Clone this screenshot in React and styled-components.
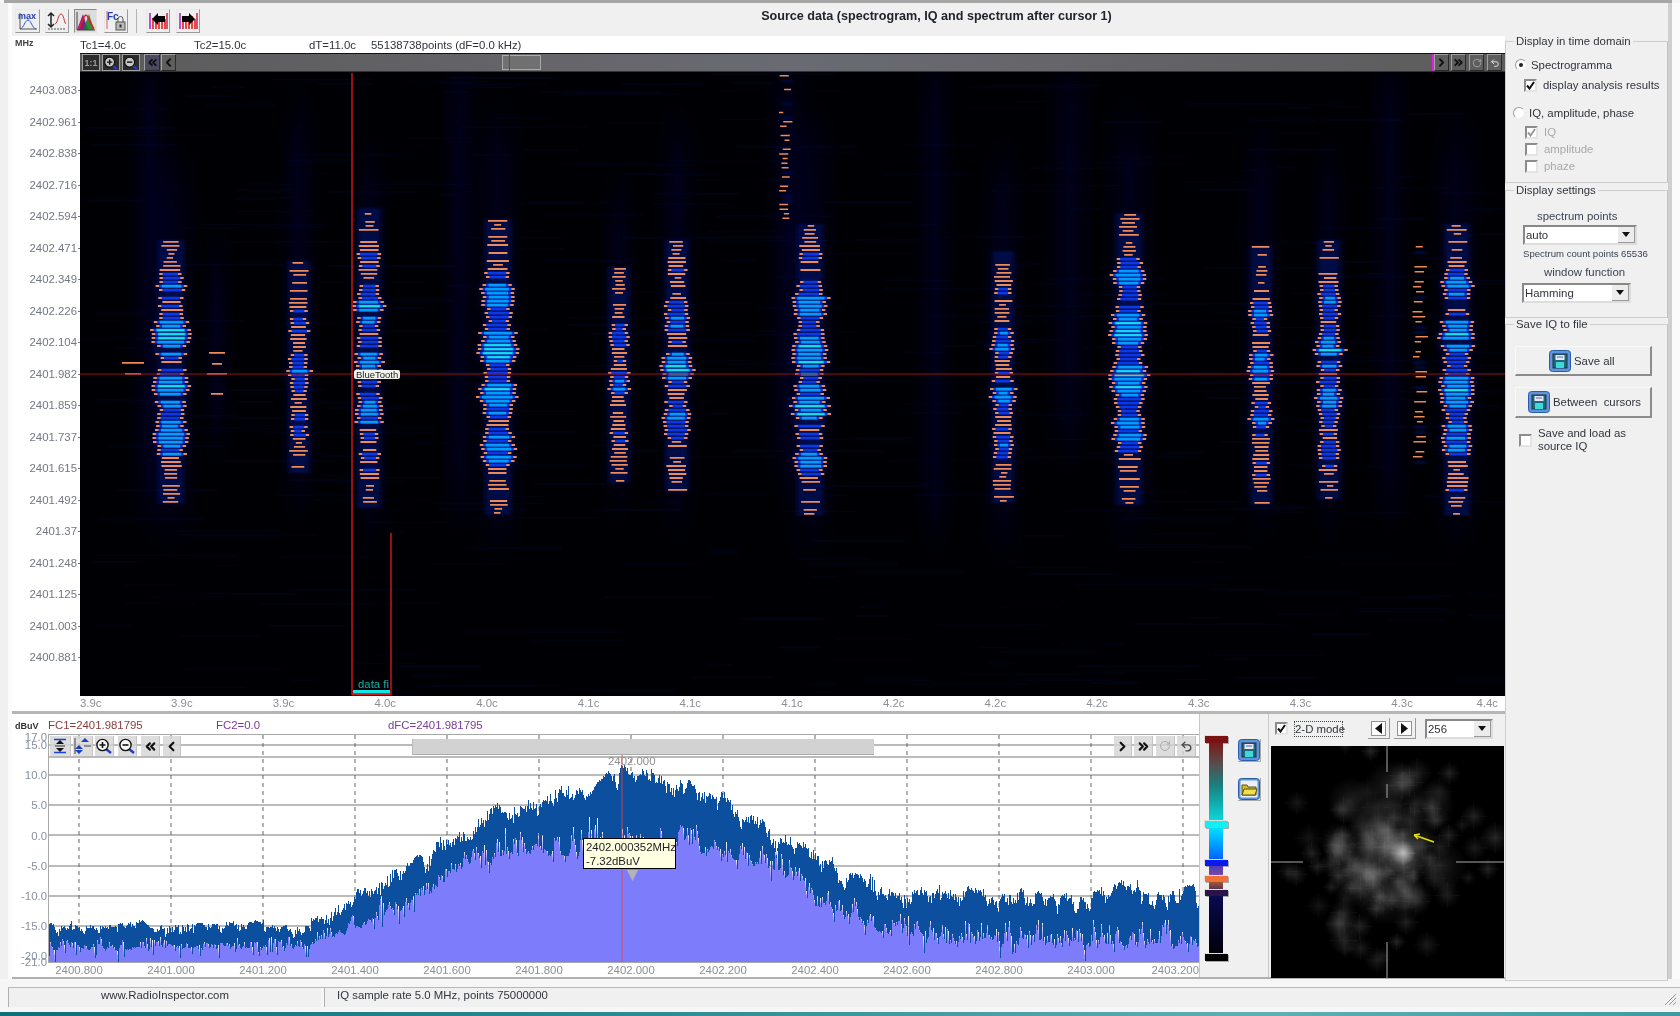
import React from 'react';
import styled, { createGlobalStyle } from 'styled-components';
import { ChevronLeft, ChevronRight, ChevronsLeft, ChevronsRight, Undo2, RotateCw } from 'lucide-react';

/* ---------- deterministic data ---------- */
const rng = (seed) => () => {
  seed |= 0; seed = (seed + 0x6d2b79f5) | 0;
  let t = Math.imul(seed ^ (seed >>> 15), 1 | seed);
  t = (t + Math.imul(t ^ (t >>> 7), 61 | t)) ^ t;
  return ((t ^ (t >>> 14)) >>> 0) / 4294967296;
};
const f = (n) => n.toFixed(1);
const rect = (x, y, w, h) => `M${f(x)} ${f(y)}h${f(w)}v${f(h)}h${f(-w)}z`;

const BURSTS = [
  [171, 241, 503, 20, 1], [299, 262, 472, 15, 0.68], [369, 209, 509, 17, 0.88], [498, 220, 515, 20, 1],
  [619, 268, 482, 14, 0.68], [677, 241, 493, 17, 0.88], [810, 225, 515, 20, 1], [1003, 252, 504, 15, 0.74],
  [1129, 214, 504, 20, 1], [1261, 246, 504, 15, 0.76], [1329, 241, 498, 16, 0.88], [1457, 225, 514, 19, 1],
];
const HALOS = [
  [150, 75, 500, 24], [460, 75, 500, 20], [787, 75, 470, 24], [935, 75, 520, 22], [1070, 75, 440, 26],
  [1390, 75, 500, 22], [299, 120, 490, 22], [498, 130, 530, 28], [677, 140, 510, 24], [1129, 130, 520, 30],
  [1261, 150, 510, 24], [1457, 140, 520, 28], [810, 130, 530, 30], [171, 170, 520, 30], [369, 170, 520, 24],
  [1003, 170, 530, 24], [619, 200, 490, 20], [1329, 170, 510, 20], [217, 260, 430, 18],
];

function buildSpectrogram() {
  const r = rng(42);
  let orange = '', blue = '', cyan = '', teal = '', faint = '', streak = '';
  const OX = 80, OY = 53;
  BURSTS.forEach(([cx, y0, y1, w, s], idx) => {
    const ph = idx * 1.7;
    for (let y = y0; y < y1; y += 4) {
      const t = (y - y0) / (y1 - y0);
      const env = Math.pow(Math.sin(Math.PI * t), 0.6);
      const lobes = 0.78 + 0.22 * Math.sin(y / 8.5 + ph);
      const a = s * env * lobes * (0.66 + 0.34 * r());
      const yy = y - OY;
      const xx = cx - OX + (r() - 0.5) * 2.4;
      faint += rect(cx - OX - w * Math.max(a, 0.45) - 4, yy - 1, 2 * w * Math.max(a, 0.45) + 8, 4);
      if (r() < 0.05) continue;
      if (a < 0.3) {
        const d = 3 + r() * 7;
        if (r() < 0.8) orange += rect(xx - d, yy, d * 2, 1.7);
        continue;
      }
      const hw = w * Math.min(1.02, a + 0.16) + r() * 3 - 1.5;
      orange += rect(xx - hw, yy, hw * 2, 2.1);
      if (a > 0.38) blue += rect(xx - hw + 3.4, yy - 0.2, hw * 2 - 6.8, 2.6);
      if (a > 0.56) cyan += rect(xx - hw + 6, yy - 0.2, hw * 2 - 12, 2.7);
      if (a > 0.76 && r() < 0.6) teal += rect(xx - hw + 7, yy + 0.3, hw * 2 - 14, 1.6);
    }
  });
  [[217, 352, 8], [217, 363, 5], [217, 373, 10], [217, 393, 6], [133, 362, 11], [133, 373, 8]].forEach(([x, y, d]) => {
    orange += rect(x - OX - d, y - OY, d * 2, 1.8);
  });
  for (let y = 246; y < 470; y += 5) {
    if (r() < 0.5) orange += rect(1420 - OX - 3 - r() * 5, y - OY, 5 + r() * 8, 1.6);
    else if (r() < 0.6) faint += rect(1420 - OX - 6, y - OY, 12, 3);
  }
  for (let y = 75; y < 222; y += 4.6) {
    if (r() < 0.55) orange += rect(787 - OX - 2 - r() * 6, y - OY, 4 + r() * 6, 1.5);
    else if (r() < 0.5) faint += rect(787 - OX - 4, y - OY, 9, 3);
  }
  for (let i = 0; i < 420; i++) {
    streak += rect(r() * 1400, r() * 643, 20 + r() * 110, 1 + r());
  }
  return { orange, blue, cyan, teal, faint, streak };
}

const ENV = [
  [45, 856, 886], [150, 855, 888], [280, 855, 885], [300, 846, 880], [350, 815, 860], [400, 786, 838], [430, 758, 815],
  [480, 732, 800], [530, 720, 800], [580, 708, 805], [620, 716, 792], [680, 734, 800], [720, 762, 815], [770, 790, 850],
  [820, 811, 870], [860, 822, 885], [950, 823, 885], [1118, 815, 885],
];
const lerpEnv = (sx, i) => {
  for (let k = 1; k < ENV.length; k++) {
    if (sx <= ENV[k][0]) {
      const [a, b] = [ENV[k - 1], ENV[k]];
      const u = (sx - a[0]) / (b[0] - a[0]);
      return (a[i] + (b[i] - a[i]) * u) * 1.0714;
    }
  }
  return ENV[ENV.length - 1][i] * 1.0714;
};

function buildWave() {
  const r = rng(7);
  const top = 734, W = 1151, H = 229;
  let fill = `M0 ${H}`;
  const lowA = Array.from({ length: 300 }, () => r());
  const lowB = Array.from({ length: 320 }, () => r());
  const lowC = Array.from({ length: 120 }, () => r());
  const sample = (arr, x, step) => {
    const p = x / step; const i = Math.floor(p); const u = p - i;
    return arr[i] * (1 - u) + arr[i + 1] * u;
  };
  let d = '';
  for (let x = 0; x < W; x += 1) {
    const sx = (x + 48) / 1.0714;
    const envTop = lerpEnv(sx, 1) - top;
    const envBot = lerpEnv(sx, 2) - top;
    const band = envBot - envTop;
    const slow = Math.pow(sample(lowC, x, 13), 1.3) * Math.min(band * 0.22, 22);
    const yt = envTop + slow + (0.1 + sample(lowA, x, 4) * 0.7) * Math.min(band * 0.5, 26) * (0.4 + r() * 0.9)
      - (r() < 0.04 ? r() * 8 : 0);
    const yb = envBot - sample(lowB, x, 4) * band * 0.42 * (0.3 + r()) + (r() < 0.14 ? r() * 14 : 0);
    const yb2 = Math.max(yb, yt + 3);
    d += `M${x + 0.5} ${f(yt)}V${f(yb2)}`;
    fill += `L${x} ${f(yb2 - 1)}`;
  }
  fill += `L${W} ${H}z`;
  return { d, fill };
}

function buildIQ() {
  const r = rng(19);
  const gauss = () => Math.sqrt(-2 * Math.log(r() + 1e-6)) * Math.cos(2 * Math.PI * r());
  const blobs = [
    [132, 107, 26, 0.46], [132, 107, 12, 0.36], [134, 145, 20, 0.28], [110, 85, 34, 0.25], [90, 125, 36, 0.22], [112, 150, 30, 0.14],
    [69, 179, 16, 0.12], [106, 214, 13, 0.11], [156, 199, 13, 0.1], [146, 27, 15, 0.12], [26, 57, 12, 0.09],
    [204, 102, 13, 0.1], [120, 40, 26, 0.14], [80, 55, 24, 0.13], [170, 120, 26, 0.12], [160, 60, 24, 0.14],
  ];
  for (let i = 0; i < 120; i++) {
    const bx = 115 + gauss() * 42;
    const by = 104 + gauss() * 42;
    blobs.push([bx, by, 7 + r() * 9, 0.05 + r() * 0.1]);
  }
  return blobs;
}

const SPEC = buildSpectrogram();
const WAVE = buildWave();
const IQ = buildIQ();

/* ---------- page ---------- */
const Global = createGlobalStyle`
  html, body { margin: 0; padding: 0; width: 1680px; height: 1016px; overflow: hidden; background: #f4f4f4; }
  * { box-sizing: border-box; }
  body { font-family: "Liberation Sans", Arial, sans-serif; font-size: 11.4px; color: #2f3440; }
`;
const Screen = styled.div`
  width: 1680px; height: 1016px; display: flex; flex-direction: column; background: #f6f6f6; filter: blur(0.4px);
`;
const TopEdge = styled.div`height: 3px; flex: none; background: #a6a6a6; margin: 0 8px 0 4px;`;
const Workspace = styled.div`
  height: 976px; flex: none; display: flex; padding-left: 12px; background: linear-gradient(90deg, #f0f0f0 8px, #fbfbfb 8px);
`;
const LeftColumn = styled.div`width: 1493px; flex: none; display: flex; flex-direction: column;`;

const Toolbar = styled.div`
  height: 33px; flex: none; display: flex; align-items: flex-start; padding: 6px 0 0 3px; background: #f0f0f0;
`;
const ToolButton = styled.div`
  width: ${(p) => p.$w}px; height: 24px; margin-right: ${(p) => p.$gap || 0}px; flex: none; display: flex; align-items: center; justify-content: center;
  background: ${(p) => (p.$on ? '#dcdcdc' : '#efefef')};
  border: 1px solid; border-color: #e8e8e8 #9a9a9a #9a9a9a #e8e8e8;
  ${(p) => p.$on && 'border-color: #8c8c8c #e4e4e4 #e4e4e4 #8c8c8c;'}
`;
const ToolDivider = styled.div`width: 1px; height: 24px; background: #b4b4b4; margin-right: 9px; flex: none;`;
const Title = styled.div`
  flex: 1; margin-left: 168px; text-align: center; font-weight: 700; font-size: 12.6px; color: #20242c; line-height: 15px;
`;

const SpectroPanel = styled.div`
  height: 675px; flex: none; display: grid; grid-template-columns: 68px 1425px; grid-template-rows: 17px 643px 15px; background: #fff;
`;
const UnitLabel = styled.div`font-size: 9px; font-weight: 700; color: #444; line-height: 14px; padding-left: 3px;`;
const InfoRow = styled.div`display: flex; align-items: center; color: #30343c; white-space: nowrap;`;
const InfoItem = styled.span`width: ${(p) => p.$w}px; flex: none;`;

const FreqAxis = styled.div`display: flex; flex-direction: column; padding-top: 22px; align-items: flex-end;`;
const FreqTick = styled.div`
  height: 31.5px; flex: none; line-height: 31.5px; color: #727782; padding-right: 3px; position: relative;
  &::after { content: ''; position: absolute; right: 0; top: 15px; width: 2px; height: 1px; background: #777; }
`;
const SpectroChart = styled.div`position: relative; width: 1425px; height: 643px; background: #000004; overflow: hidden;`;
const Drawing = styled.svg`display: block;`;
const DarkNav = styled.div`
  position: absolute; left: 0; top: 0; right: 0; height: 19px; display: flex; align-items: center; padding: 0 3px 0 2px;
  background: linear-gradient(90deg, #5b5b5b, #6a6a72 50%, #5c5c5c); border-top: 1px solid #111; border-bottom: 1px solid #333;
`;
const DarkButton = styled.div`
  width: ${(p) => p.$w || 17}px; height: 17px; margin-left: ${(p) => p.$m || 0}px; flex: none; display: flex; align-items: center; justify-content: center;
  background: ${(p) => (p.$hi ? '#4a4a62' : '#5e5e5e')}; border: 1px solid; border-color: #a0a0a0 #2a2a2a #2a2a2a #a0a0a0;
  font-size: 9px; color: #999; font-weight: 700;
  ${(p) => p.$dark && 'background: #2c2c2c; border-color: #a0a0a0;'}
`;
const DarkTrack = styled.div`flex: 1; height: 100%; display: flex; align-items: center; min-width: 0; border-right: 2px solid #e020e0;`;
const DarkThumb = styled.div`
  width: 39px; height: 15px; margin-left: 326px; background: #707070; border: 1px solid #aaa; position: relative;
  &::before { content: ''; position: absolute; left: 6px; top: -2px; bottom: -2px; width: 1px; background: #c02020; }
`;
const Tag = styled.div`
  position: absolute; left: 274px; top: 317px; height: 9px; line-height: 9px; padding: 0 2px; font-size: 9.5px; color: #222; background: #f4f4ee; border-radius: 2px; white-space: nowrap;
`;
const DataLabel = styled.div`
  position: absolute; left: 278px; top: 625px; line-height: 13px; color: #12b0a8; white-space: nowrap;
`;
const TimeRuler = styled.div`grid-column: 1 / 3; display: flex; padding-left: 68px; color: #8b8f98; line-height: 15px; white-space: nowrap;`;
const TimeTick = styled.div`
  width: ${(p) => p.$w || 101.7}px; flex: none; text-align: ${(p) => p.$a || 'center'}; padding-left: ${(p) => p.$pl || 0}px;
`;
const Divider = styled.div`height: 3px; flex: none; background: #b6b6b6;`;

const LowerPanel = styled.div`height: 265px; flex: none; display: flex; border-bottom: 2px solid #b0b0b0;`;
const SpectrumColumn = styled.div`
  width: 1187px; flex: none; display: grid; grid-template-columns: 36px 1151px; grid-template-rows: 20px 229px 14px; background: #fff;
`;
const DbUnit = styled.div`font-size: 9px; font-weight: 700; color: #333; padding: 7px 0 0 3px; white-space: nowrap;`;
const CursorRow = styled.div`display: flex; align-items: flex-end; line-height: 17px; white-space: nowrap;`;
const Cursor = styled.span`width: ${(p) => p.$w}px; flex: none; color: ${(p) => p.$c};`;
const DbAxis = styled.div`display: flex; flex-direction: column; align-items: flex-end; padding-top: 4px;`;
const DbTick = styled.div`
  height: 30.2px; flex: none; line-height: 14px; color: #8791a0; padding-right: 1px; position: relative;
`;
const DbOverlap = styled.span`position: absolute; right: 1px; top: ${(p) => p.$t}px;`;
const SpectrumChart = styled.div`position: relative; width: 1151px; height: 229px; border: 1px solid #a8a8a8; border-right: none; background: #fff; overflow: hidden;`;
const LightNav = styled.div`position: absolute; left: 0; right: 0; top: 1px; height: 21px; display: flex; align-items: center; padding: 0 3px 0 1px;`;
const LightButton = styled.div`
  width: ${(p) => p.$w || 20}px; height: 21px; margin-left: ${(p) => p.$m || 0}px; flex: none; display: flex; align-items: center; justify-content: center;
  background: rgba(214, 214, 214, .82); border-bottom: 1px solid #b8b8b8; border-right: 1px solid #c4c4c4;
`;
const LightTrack = styled.div`flex: 1; height: 100%; display: flex; align-items: center; min-width: 0;`;
const LightThumb = styled.div`width: 462px; height: 16px; margin-left: 231px; background: #d2d2d2; border-bottom: 1px solid #aaa; border-left: 1px solid #bbb;`;
const PeakLabel = styled.div`position: absolute; left: 559px; top: 19px; line-height: 14px; color: #8d8d92;`;
const Hint = styled.div`
  position: absolute; left: 534px; top: 103px; width: 93px; height: 31px; padding: 1px 2px; background: #ffffe1; border: 1px solid #000;
  line-height: 14px; color: #222; white-space: nowrap;
`;
const FreqRuler = styled.div`grid-column: 1 / 3; display: flex; padding: 1px 0 0 21px; overflow: hidden; color: #8d8f96; line-height: 13px; white-space: nowrap;`;
const FreqLabel = styled.div`width: ${(p) => p.$w || 92}px; flex: none; text-align: ${(p) => (p.$w ? 'right' : 'center')};`;

const ScalePanel = styled.div`
  width: 70px; flex: none; display: flex; padding: 22px 0 0 4px; background: #f0f0f0; border-left: 1px solid #c8c8c8; border-right: 1px solid #c8c8c8;
`;
const ScaleColumn = styled.div`width: 24px; flex: none; display: flex; flex-direction: column; align-items: center;`;
const ScaleHandle = styled.div`width: 23px; height: ${(p) => p.$h || 7}px; flex: none; background: ${(p) => p.$c}; box-shadow: 1px 1px 0 #aaa, -1px -1px 0 #ddd;`;
const ScaleBar = styled.div`width: 14px; height: ${(p) => p.$h}px; flex: none; background: ${(p) => p.$c};`;
const ScaleButtons = styled.div`display: flex; flex-direction: column; gap: 16px; padding: 3px 0 0 10px;`;
const IconButton = styled.div`
  width: 23px; height: 23px; display: flex; align-items: center; justify-content: center; background: #f0f0f0;
  border-right: 1px solid #aaa; border-bottom: 1px solid #aaa;
`;
const IQPanel = styled.div`width: 236px; flex: none; display: flex; flex-direction: column; background: #f0f0f0;`;
const IQHeader = styled.div`height: 32px; flex: none; display: flex; align-items: center; padding: 0 12px 3px 6px;`;
const ModeLabel = styled.span`
  margin-left: 6px; width: 49px; height: 16px; line-height: 14px; border: 1px dotted #444; white-space: nowrap; text-align: center; color: #30343c;
`;
const StepButton = styled.div`
  width: 22px; height: 21px; margin-left: ${(p) => p.$m}px; flex: none; display: flex; align-items: center; justify-content: center; background: #f0f0f0;
  border-right: 1px solid #999; border-bottom: 1px solid #999;
`;
const StepInner = styled.div`width: 15px; height: 15px; display: flex; align-items: center; justify-content: center; border: 1.5px solid #12c8d8; background: #fff;`;
const IQView = styled.div`width: 233px; height: 232px; flex: none; margin-left: 2px; background: #000;`;

/* right panel */
const SidePanel = styled.div`
  width: 167px; flex: none; display: flex; flex-direction: column; padding-top: 32px; background: #f0f0f0; border-right: 4px solid #cfcfcf;
`;
const Group = styled.fieldset`
  height: ${(p) => p.$h}px; flex: none; margin: 0 0 ${(p) => p.$mb || 0}px; padding: 0; min-width: 0; border: 1px solid #cdcdcd; border-right-color: #c4c4c4; display: block;
`;
const Legend = styled.legend`margin-left: 8px; padding: 0 2px; line-height: 13px; color: #30343c; white-space: nowrap;`;
const Option = styled.div`
  height: 14px; margin-top: ${(p) => p.$mt}px; padding-left: ${(p) => p.$pl}px; display: flex; align-items: center; white-space: nowrap; line-height: 14px;
  color: ${(p) => (p.$off ? '#a8a8a8' : '#30343c')};
`;
const RadioDot = styled.span`
  width: 12px; height: 12px; flex: none; border-radius: 50%; background: #fff; border: 1px solid; border-color: #9a9a9a #eee #eee #9a9a9a; margin-right: ${(p) => p.$gap}px; position: relative;
  ${(p) => p.$on && `&::after { content: ''; position: absolute; left: 3px; top: 3px; width: 4px; height: 4px; border-radius: 50%; background: #222; }`}
`;
const CheckBox = styled.span`
  width: 13px; height: 13px; flex: none; background: #fff; border: 2px solid; border-color: #8c8c8c #e4e4e4 #e4e4e4 #8c8c8c; margin-right: ${(p) => p.$gap}px; display: flex; align-items: center; justify-content: center;
`;
const Caption = styled.div`
  margin-top: ${(p) => p.$mt}px; padding-left: ${(p) => p.$pl}px; height: 14px; line-height: 14px; font-size: ${(p) => p.$fs || 11.4}px; white-space: nowrap; color: #3c4454;
`;
const Select = styled.div`
  width: ${(p) => p.$w}px; height: 20px; margin: ${(p) => p.$mt}px 0 0 ${(p) => p.$ml}px; display: flex; justify-content: space-between; background: #fff;
  border: 2px solid; border-color: #888 #ddd #ddd #888; line-height: 16px; padding-left: 1px; color: #30343c;
`;
const SelectArrow = styled.span`
  width: 17px; flex: none; display: flex; align-items: center; justify-content: center; background: #ececec; border-right: 1px solid #999; border-bottom: 1px solid #999;
  &::after { content: ''; border: 4px solid transparent; border-top: 5px solid #111; border-bottom: none; }
`;
const SaveButton = styled.div`
  width: 137px; height: ${(p) => p.$h}px; margin: ${(p) => p.$mt}px 0 0 9px; display: flex; align-items: center; padding-left: ${(p) => p.$pl}px; gap: 3px;
  background: #f0f0f0; border: 1px solid; border-color: #f8f8f8 #8c8c8c #8c8c8c #f8f8f8; border-right-width: 2px; border-bottom-width: 2px; white-space: pre; color: #30343c;
`;
const SourceOption = styled.div`
  margin: 9px 0 0 13px; display: flex; align-items: center; line-height: 13px; color: #30343c;
`;

const StatusBar = styled.div`
  height: 25px; flex: none; margin: 8px 0 0 8px; display: flex; align-items: stretch; border-top: 1px solid #b8b8b8; position: relative;
`;
const StatusCell = styled.div`
  width: ${(p) => p.$w}px; flex: ${(p) => (p.$w ? 'none' : 1)}; background: #f0f0f0; border-left: 1px solid #b0b0b0; height: 19px; line-height: 15px; padding-left: ${(p) => p.$pl || 0}px;
  text-align: ${(p) => (p.$c ? 'center' : 'left')}; color: #30343c; margin-left: ${(p) => p.$m || 0}px; white-space: nowrap;
`;
const Grip = styled.svg`position: absolute; right: 3px; top: 4px;`;
const Strip = styled.div`
  flex: 1; background: linear-gradient(90deg, #0f6f78, #2e8c94 40%, #5fb0b4 75%, #3d9aa2);
`;

/* ---------- icons ---------- */
const MaxIcon = () => (
  <svg width="22" height="20" viewBox="0 0 22 20">
    <text x="1" y="8" fontSize="9" fontWeight="700" fill="#2040b0" fontFamily="Liberation Sans">max</text>
    <path d="M3 18C7 17 8 9 11 9s4 8 8 9" stroke="#3050c8" fill="none" />
    <path d="M3 2v16h17" stroke="#555" fill="none" />
  </svg>
);
const RangeIcon = () => (
  <svg width="20" height="20" viewBox="0 0 20 20">
    <path d="M4 2v14M1 5l3-3 3 3M1 13l3 3 3-3" stroke="#222" strokeWidth="1.5" fill="none" />
    <path d="M8 13C11 12 11 3 14 3s3 9 5 10" stroke="#d03030" fill="none" />
    <path d="M1 18h18" stroke="#555" strokeDasharray="2 1" />
  </svg>
);
const SpectrumIcon = () => (
  <svg width="20" height="20" viewBox="0 0 20 20">
    <path d="M1 19L7 3l5 16z" fill="#8a1a8a" />
    <path d="M7 19l6-16 5 16z" fill="#108020" opacity=".85" />
    <path d="M3 18C6 10 8 4 10 4s4 8 8 14" stroke="#e02020" strokeWidth="1.6" fill="none" />
    <path d="M1 1v18h18" stroke="#444" fill="none" />
  </svg>
);
const LockIcon = () => (
  <svg width="20" height="22" viewBox="0 0 20 22">
    <text x="1" y="10" fontSize="10" fontWeight="700" fill="#2040b0" fontFamily="Liberation Sans">Fc</text>
    <path d="M1 1v18" stroke="#d06060" />
    <rect x="10" y="12" width="9" height="8" fill="#bbb" stroke="#555" />
    <path d="M12 12V9a2.5 2.5 0 0 1 5 0v3" stroke="#555" fill="none" />
    <rect x="13.5" y="14.5" width="2" height="3" fill="#333" />
  </svg>
);
const ArrowSpikeIcon = ({ dir }) => (
  <svg width="21" height="20" viewBox="0 0 21 20">
    <path d="M2 2v16" stroke="#a020c0" strokeWidth="1.5" />
    <path d="M19 2v16" stroke="#d02040" strokeWidth="1.5" />
    <path d="M5 18V7M8 18V5M11 18V8M14 18V5M17 18V8" stroke="#e02020" strokeWidth="1.6" />
    <path d={dir === 'l' ? 'M4 8l6-6v3h7v6h-7v3z' : 'M17 8l-6-6v3H4v6h7v3z'} fill="#000" />
  </svg>
);
const Magnifier = ({ plus, light }) => (
  <svg width="18" height="16" viewBox="0 0 18 16">
    <path d="M11 11l5 4" stroke="#2040c0" strokeWidth="2.4" />
    <circle cx="7.5" cy="7" r="5.6" fill={light ? '#f8f8f8' : '#c8c8c8'} stroke="#111" strokeWidth="1.4" />
    <path d={plus ? 'M4.5 7h6M7.5 4v6' : 'M4.5 7h6'} stroke="#111" strokeWidth="1.6" />
  </svg>
);
const Tick = ({ c = '#111' }) => (
  <svg width="9" height="9" viewBox="0 0 9 9"><path d="M1 4.5l2.5 3L8 1" stroke={c} strokeWidth="2" fill="none" /></svg>
);
const Floppy = () => (
  <svg width="22" height="22" viewBox="0 0 22 22">
    <rect x="0.5" y="0.5" width="21" height="21" rx="3" fill="#5e94dc" stroke="#2a5ca8" />
    <rect x="4" y="4" width="14" height="14" fill="#1a6a78" stroke="#203040" />
    <rect x="6.5" y="5" width="9" height="5" fill="#e6e6f4" />
    <path d="M8 7h6" stroke="#6060a0" />
    <rect x="7" y="12" width="8" height="6" fill="#40d8d8" />
  </svg>
);
const Folder = () => (
  <svg width="22" height="22" viewBox="0 0 22 22">
    <rect x="0.5" y="0.5" width="21" height="21" rx="3" fill="#5e94dc" stroke="#2a5ca8" />
    <rect x="2.5" y="2.5" width="17" height="17" rx="1" fill="#eef0f8" />
    <path d="M4 7h5l1 2h8v8H4z" fill="#d0c030" stroke="#5a5010" />
    <path d="M4 17l2-6h13l-2 6z" fill="#f0e050" stroke="#5a5010" />
  </svg>
);
const Triangle = ({ dir }) => (
  <svg width="9" height="11" viewBox="0 0 9 11"><path d={dir === 'l' ? 'M8 0v11L1 5.5z' : 'M1 0v11l7-5.5z'} fill="#111" /></svg>
);

/* ---------- charts ---------- */
const SpectrogramArt = () => (
  <Drawing width="1425" height="643" viewBox="0 0 1425 643">
    <defs>
      <linearGradient id="halo" x1="0" x2="1" y1="0" y2="0">
        <stop offset="0" stopColor="#001060" stopOpacity="0" />
        <stop offset=".5" stopColor="#001060" stopOpacity=".22" />
        <stop offset="1" stopColor="#001060" stopOpacity="0" />
      </linearGradient>
      <filter id="tall" x="0" y="-20%" width="100%" height="140%"><feGaussianBlur stdDeviation="0 26" /></filter>
      <filter id="soft" x="0" y="0" width="100%" height="100%"><feGaussianBlur stdDeviation="0.65" /></filter>
      <filter id="glow" x="0" y="0" width="100%" height="100%"><feGaussianBlur stdDeviation="2.4 1" /></filter>
    </defs>
    <path d={SPEC.streak} fill="#000a2a" opacity=".35" />
    <g filter="url(#tall)">
      {HALOS.map(([x, y0, y1, w], i) => (
        <rect key={i} x={x - 80 - w} y={y0 - 53} width={w * 2} height={y1 - y0} fill="url(#halo)" />
      ))}
    </g>
    <path d={SPEC.faint} fill="#06126e" opacity=".55" filter="url(#glow)" />
    <g filter="url(#soft)">
      <path d={SPEC.orange} fill="#ee8a58" />
      <path d={SPEC.blue} fill="#0a38e8" />
      <path d={SPEC.cyan} fill="#049cff" />
      <path d={SPEC.teal} fill="#18e0e8" />
    </g>
    <path d="M0 321H1425" stroke="#9a1010" strokeWidth="1" />
    <path d="M272 20V642M311 480V642" stroke="#d81818" strokeWidth="1.4" />
    <path d="M272 641.5H311" stroke="#d81818" strokeWidth="1.4" />
    <rect x="273" y="637" width="37" height="3.5" fill="#10e8e8" />
  </Drawing>
);

const dbLines = [11, 23, 41, 71, 101, 132, 162, 192, 222];
const SpectrumArt = () => (
  <Drawing width="1150" height="227" viewBox="0 0 1150 227">
    {dbLines.map((y) => <path key={y} d={`M0 ${y - 1}H1150`} stroke="#a4a4a4" strokeWidth="1.6" />)}
    {Array.from({ length: 13 }, (_, k) => (
      <path key={k} d={`M${30 + 92 * k} 0V227`} stroke="#666" strokeWidth="1" strokeDasharray="4 4" />
    ))}
    <path d={WAVE.fill} fill="#7d7dfb" />
    <path d={WAVE.d} stroke="#0c4f9f" strokeWidth="1" fill="none" shapeRendering="crispEdges" />
    <path d="M573 9V227" stroke="#ee4040" strokeWidth="1" opacity=".85" />
    <path d="M578 135h11l-5.5 11z" fill="#b4b4b4" />
  </Drawing>
);

const IQArt = () => (
  <Drawing width="233" height="232" viewBox="0 0 233 232">
    <defs>
      <radialGradient id="blob">
        <stop offset="0" stopColor="#fff" stopOpacity="1" />
        <stop offset=".5" stopColor="#fff" stopOpacity=".4" />
        <stop offset="1" stopColor="#fff" stopOpacity="0" />
      </radialGradient>
    </defs>
    {IQ.map(([x, y, r, o], i) => (
      <g key={i} opacity={o}>
        <circle cx={x} cy={y} r={r} fill="url(#blob)" />
        {r < 20 && <path d={`M${x - r} ${y}H${x + r}M${x} ${y - r}V${y + r}`} stroke="#fff" strokeWidth=".7" opacity=".5" />}
      </g>
    ))}
    <path d="M116 0V26M116 38V52M116 196V232M0 116H32M185 116H233" stroke="#aaa" strokeWidth="1" />
    <path d="M143 89l20 7M143 89l6-1M143 89l4 4" stroke="#e8e000" strokeWidth="1.4" fill="none" />
  </Drawing>
);

const FREQS = ['2403.083','2402.961','2402.838','2402.716','2402.594','2402.471','2402.349','2402.226','2402.104','2401.982','2401.859','2401.737','2401.615','2401.492','2401.37','2401.248','2401.125','2401.003','2400.881'];
const TIMES = ['3.9c','3.9c','4.0c','4.0c','4.1c','4.1c','4.1c','4.2c','4.2c','4.2c','4.3c','4.3c','4.3c'];
const DBS = ['15.0','10.0','5.0','0.0','-5.0','-10.0','-15.0','-20.0'];
const XFREQ = ['2400.800','2401.000','2401.200','2401.400','2401.600','2401.800','2402.000','2402.200','2402.400','2402.600','2402.800','2403.000'];

const iconColor = '#111';

export default function App() {
  return (
    <Screen>
      <Global />
      <TopEdge />
      <Workspace>
        <LeftColumn>
          <Toolbar>
            <ToolButton $w={25} $gap={5}><MaxIcon /></ToolButton>
            <ToolButton $w={24} $gap={5}><RangeIcon /></ToolButton>
            <ToolButton $w={23} $gap={7} $on><SpectrumIcon /></ToolButton>
            <ToolButton $w={24} $gap={8}><LockIcon /></ToolButton>
            <ToolDivider />
            <ToolButton $w={24} $gap={6}><ArrowSpikeIcon dir="l" /></ToolButton>
            <ToolButton $w={24}><ArrowSpikeIcon dir="r" /></ToolButton>
            <Title>Source data (spectrogram, IQ and spectrum after cursor 1)</Title>
          </Toolbar>

          <SpectroPanel>
            <UnitLabel>MHz</UnitLabel>
            <InfoRow>
              <InfoItem $w={114}>Tc1=4.0c</InfoItem>
              <InfoItem $w={115}>Tc2=15.0c</InfoItem>
              <InfoItem $w={62}>dT=11.0c</InfoItem>
              <InfoItem $w={160}>55138738points (dF=0.0 kHz)</InfoItem>
            </InfoRow>
            <FreqAxis>
              {FREQS.map((v) => <FreqTick key={v}>{v}</FreqTick>)}
            </FreqAxis>
            <SpectroChart>
              <SpectrogramArt />
              <DarkNav>
                <DarkButton $w={18} $dark>1:1</DarkButton>
                <DarkButton $w={18} $m={2} $dark><Magnifier plus /></DarkButton>
                <DarkButton $w={18} $m={2} $dark><Magnifier /></DarkButton>
                <DarkButton $w={16} $m={4} $hi><ChevronsLeft size={13} strokeWidth={3.4} color={iconColor} /></DarkButton>
                <DarkButton $w={15} $m={1}><ChevronLeft size={13} strokeWidth={3.4} color={iconColor} /></DarkButton>
                <DarkTrack><DarkThumb /></DarkTrack>
                <DarkButton $w={15}><ChevronRight size={13} strokeWidth={3.4} color={iconColor} /></DarkButton>
                <DarkButton $w={15} $m={2}><ChevronsRight size={13} strokeWidth={3.4} color={iconColor} /></DarkButton>
                <DarkButton $w={15} $m={3}><RotateCw size={10} strokeWidth={2} color="#aaa" /></DarkButton>
                <DarkButton $w={15} $m={3}><Undo2 size={10} strokeWidth={2.4} color="#ddd" /></DarkButton>
              </DarkNav>
              <Tag>BlueTooth</Tag>
              <DataLabel>data fi</DataLabel>
            </SpectroChart>
            <TimeRuler>
              <TimeTick $w={51} $a="left">3.9c</TimeTick>
              {TIMES.map((t, i) => <TimeTick key={i}>{t}</TimeTick>)}
              <TimeTick $w={45} $a="right">4.4c</TimeTick>
            </TimeRuler>
          </SpectroPanel>
          <Divider />

          <LowerPanel>
            <SpectrumColumn>
              <DbUnit>dBuV</DbUnit>
              <CursorRow>
                <Cursor $w={168} $c="#8a3c3c">FC1=2401.981795</Cursor>
                <Cursor $w={172} $c="#7a3a9c">FC2=0.0</Cursor>
                <Cursor $w={160} $c="#7a3a9c">dFC=2401.981795</Cursor>
              </CursorRow>
              <DbAxis>
                {DBS.map((v, i) => (
                  <DbTick key={v}>
                    {i === 0 && <DbOverlap $t={-8}>17.0</DbOverlap>}
                    {i === DBS.length - 1 && <DbOverlap $t={6}>-21.0</DbOverlap>}
                    {v}
                  </DbTick>
                ))}
              </DbAxis>
              <SpectrumChart>
                <SpectrumArt />
                <LightNav>
                  <LightButton $w={21}>
                    <svg width="16" height="16" viewBox="0 0 16 16"><path d="M2 1.5h12M2 14.5h12" stroke="#1a40e0" strokeWidth="1.5" /><path d="M8 2l4 4H4zM8 14l-4-4h8z" fill="#111" /><path d="M3 8h10" stroke="#333" /></svg>
                  </LightButton>
                  <LightButton $w={20} $m={2}>
                    <svg width="18" height="18" viewBox="0 0 18 18"><path d="M11 1l4 4H7zM5 8l4 4H1z" fill="#1a40c0" /><path d="M5 17l-4-4h8z" fill="#1a40c0" /><path d="M1 1v16M10 9h7" stroke="#444" /></svg>
                  </LightButton>
                  <LightButton $w={19} $m={2}><Magnifier plus light /></LightButton>
                  <LightButton $w={19} $m={4}><Magnifier light /></LightButton>
                  <LightButton $w={19} $m={4}><ChevronsLeft size={15} strokeWidth={3.4} color={iconColor} /></LightButton>
                  <LightButton $w={18} $m={3}><ChevronLeft size={15} strokeWidth={3.4} color={iconColor} /></LightButton>
                  <LightTrack><LightThumb /></LightTrack>
                  <LightButton $w={18}><ChevronRight size={15} strokeWidth={3.4} color={iconColor} /></LightButton>
                  <LightButton $w={19} $m={2}><ChevronsRight size={15} strokeWidth={3.4} color={iconColor} /></LightButton>
                  <LightButton $w={19} $m={3}><RotateCw size={12} strokeWidth={2} color="#aaa" /></LightButton>
                  <LightButton $w={19} $m={2}><Undo2 size={13} strokeWidth={2.4} color="#444" /></LightButton>
                </LightNav>
                <PeakLabel>2402.000</PeakLabel>
                <Hint>2402.000352MHz<br />-7.32dBuV</Hint>
              </SpectrumChart>
              <FreqRuler>
                {XFREQ.map((v) => <FreqLabel key={v}>{v}</FreqLabel>)}
                <FreqLabel $w={62}>2403.200</FreqLabel>
              </FreqRuler>
            </SpectrumColumn>

            <ScalePanel>
              <ScaleColumn>
                <ScaleHandle $c="#7a1212" />
                <ScaleBar $h={78} $c="linear-gradient(#7a1a1a, #5a4a4a 25%, #1a8080 55%, #0ad8dc)" />
                <ScaleHandle $c="#10f0f0" />
                <ScaleBar $h={32} $c="linear-gradient(#00e0ff, #0060ff)" />
                <ScaleHandle $c="#0a1ae8" $h={6} />
                <ScaleBar $h={10} $c="linear-gradient(#4a3ab8, #8050a0)" />
                <ScaleHandle $c="#f07038" $h={6} />
                <ScaleBar $h={8} $c="linear-gradient(#a05838, #503050)" />
                <ScaleHandle $c="#281448" $h={6} />
                <ScaleBar $h={58} $c="linear-gradient(#0a0a50, #000008)" />
                <ScaleHandle $c="#000" />
              </ScaleColumn>
              <ScaleButtons>
                <IconButton><Floppy /></IconButton>
                <IconButton><Folder /></IconButton>
              </ScaleButtons>
            </ScalePanel>

            <IQPanel>
              <IQHeader>
                <CheckBox $gap={0}><Tick /></CheckBox>
                <ModeLabel>2-D mode</ModeLabel>
                <StepButton $m={25}><StepInner><Triangle dir="l" /></StepInner></StepButton>
                <StepButton $m={4}><StepInner><Triangle dir="r" /></StepInner></StepButton>
                <Select $w={69} $mt={0} $ml={9}>256<SelectArrow /></Select>
              </IQHeader>
              <IQView><IQArt /></IQView>
            </IQPanel>
          </LowerPanel>
        </LeftColumn>

        <SidePanel>
          <Group $h={148} $mb={1}>
            <Legend>Display in time domain</Legend>
            <Option $mt={10} $pl={9}><RadioDot $on $gap={4} />Spectrogramma</Option>
            <Option $mt={6} $pl={18}><CheckBox $gap={6}><Tick /></CheckBox>display analysis results</Option>
            <Option $mt={14} $pl={7}><RadioDot $gap={4} />IQ, amplitude, phase</Option>
            <Option $mt={5} $pl={19} $off><CheckBox $gap={6}><Tick c="#9a9a9a" /></CheckBox>IQ</Option>
            <Option $mt={3} $pl={19} $off><CheckBox $gap={6} />amplitude</Option>
            <Option $mt={3} $pl={19} $off><CheckBox $gap={6} />phaze</Option>
          </Group>
          <Group $h={134}>
            <Legend>Display settings</Legend>
            <Caption $mt={12} $pl={31}>spectrum points</Caption>
            <Select $w={114} $mt={2} $ml={17}>auto<SelectArrow /></Select>
            <Caption $mt={2} $pl={17} $fs={9.6}>Spectrum count points 65536</Caption>
            <Caption $mt={4} $pl={38}>window function</Caption>
            <Select $w={109} $mt={4} $ml={16}>Hamming<SelectArrow /></Select>
          </Group>
          <Group $h={663}>
            <Legend>Save IQ to file</Legend>
            <SaveButton $h={30} $mt={15} $pl={33}><Floppy />Save all</SaveButton>
            <SaveButton $h={31} $mt={11} $pl={12}><Floppy />Between  cursors</SaveButton>
            <SourceOption>
              <CheckBox $gap={6} />
              <span>Save and load as<br />source IQ</span>
            </SourceOption>
          </Group>
        </SidePanel>
      </Workspace>
      <StatusBar>
        <StatusCell $w={313} $c>www.RadioInspector.com</StatusCell>
        <StatusCell $m={3} $pl={12}>IQ sample rate 5.0 MHz, points 75000000</StatusCell>
        <Grip width="14" height="14" viewBox="0 0 14 14"><path d="M2 13L13 2M6 13L13 6M10 13l3-3" stroke="#999" /></Grip>
      </StatusBar>
      <Strip />
    </Screen>
  );
}
